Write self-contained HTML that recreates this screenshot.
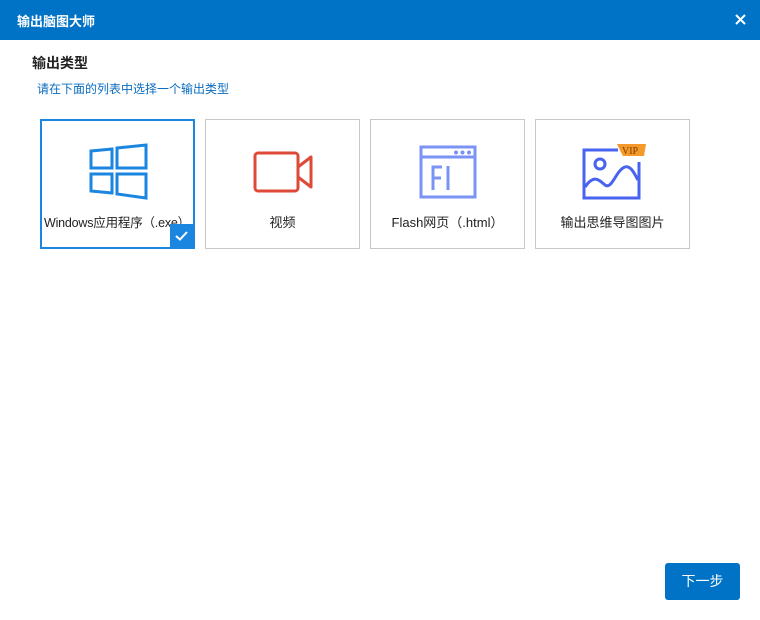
<!DOCTYPE html>
<html><head><meta charset="utf-8"><style>
body{margin:0;width:760px;height:620px;background:#fff;font-family:"Liberation Sans","Noto Sans CJK SC",sans-serif;position:relative;overflow:hidden}
.hd{position:absolute;left:0;top:0;width:760px;height:40px;background:#0073c6;color:#fff;font-size:13px;font-weight:bold}
.hd span{position:absolute;left:17px;top:11px}
.x{position:absolute;right:14px;top:14px}
.t1{position:absolute;left:32px;top:53px;font-size:14px;font-weight:bold;color:#222}
.t2{position:absolute;left:37px;top:80px;font-size:12px;color:#0a6cc0}
.c{position:absolute;top:119px;width:153px;height:128px;border:1px solid #c8c8c8;box-sizing:content-box}
.c .l{position:absolute;left:0;right:0;top:92px;text-align:center;font-size:13px;color:#222;white-space:nowrap}
.c svg{position:absolute}
.sel{border:2px solid #1a86e0;width:151px;height:126px}
.chk{position:absolute;right:0;bottom:0;width:23px;height:23px;background:#1a86e0}
.btn{position:absolute;left:665px;top:563px;width:75px;height:37px;background:#0073c6;border-radius:3px;color:#fff;font-size:14px;text-align:center;line-height:37px}
</style></head><body>
<div class="hd"><span>输出脑图大师</span>
<svg class="x" width="11" height="11" viewBox="0 0 11 11"><path d="M1 1L10 10M10 1L1 10" stroke="#fff" stroke-width="2"/></svg></div>
<div class="t1">输出类型</div>
<div class="t2">请在下面的列表中选择一个输出类型</div>

<div class="c sel" style="left:40px">
<svg style="left:46px;top:22px" width="62" height="58" viewBox="0 0 62 58"><g fill="none" stroke="#1a86e0" stroke-width="3"><path d="M3 8L24 6V25H3Z"/><path d="M29 5L58 2V25H29Z"/><path d="M3 31H24V50L3 48Z"/><path d="M29 31H58V55L29 51Z"/></g></svg>
<div class="l" style="top:91px;left:2px;right:auto;font-size:12.5px;letter-spacing:-0.2px">Windows应用程序（.exe）</div>
<div class="chk"><svg width="23" height="23" viewBox="0 0 23 23"><path d="M6 12L10 15.5L17 8" fill="none" stroke="#fff" stroke-width="2"/></svg></div>
</div>

<div class="c" style="left:205px">
<svg style="left:46px;top:30px" width="64" height="44" viewBox="0 0 64 44"><g fill="none" stroke="#de4a37" stroke-width="3" stroke-linejoin="round"><rect x="3" y="3" width="43" height="38" rx="3"/><path d="M46 17L59 7V37L46 27"/></g></svg>
<div class="l">视频</div></div>

<div class="c" style="left:370px">
<svg style="left:48px;top:25px" width="60" height="56" viewBox="0 0 60 56"><g fill="none" stroke="#7b93f5" stroke-width="3"><rect x="2" y="2" width="54" height="50"/><path d="M2 12H56"/><path d="M23 22H14V45M14 33H22M29 21V45"/></g><g fill="#7b93f5"><circle cx="37" cy="7.5" r="2"/><circle cx="43.5" cy="7.5" r="2"/><circle cx="50" cy="7.5" r="2"/></g></svg>
<div class="l">Flash网页（.html）</div></div>

<div class="c" style="left:535px">
<svg style="left:46px;top:22px" width="66" height="58" viewBox="0 0 66 58"><g fill="none" stroke="#4863f0" stroke-width="3"><path d="M36 8H2V56H57V20"/><circle cx="18" cy="22" r="5"/><path d="M3 45C12 32 17 38 23 43C30 48 34 28 43 25C49 23 53 33 56 38"/></g><path d="M35 2H64L62 14H41Z" fill="#f59a2a"/><path d="M35 2L41 8V14Z" fill="#f59a2a"/><text x="40" y="12" font-size="10" font-family="Liberation Serif,serif" fill="#7a3d00">VIP</text></svg>
<div class="l">输出思维导图图片</div></div>

<div class="btn">下一步</div>
</body></html>
